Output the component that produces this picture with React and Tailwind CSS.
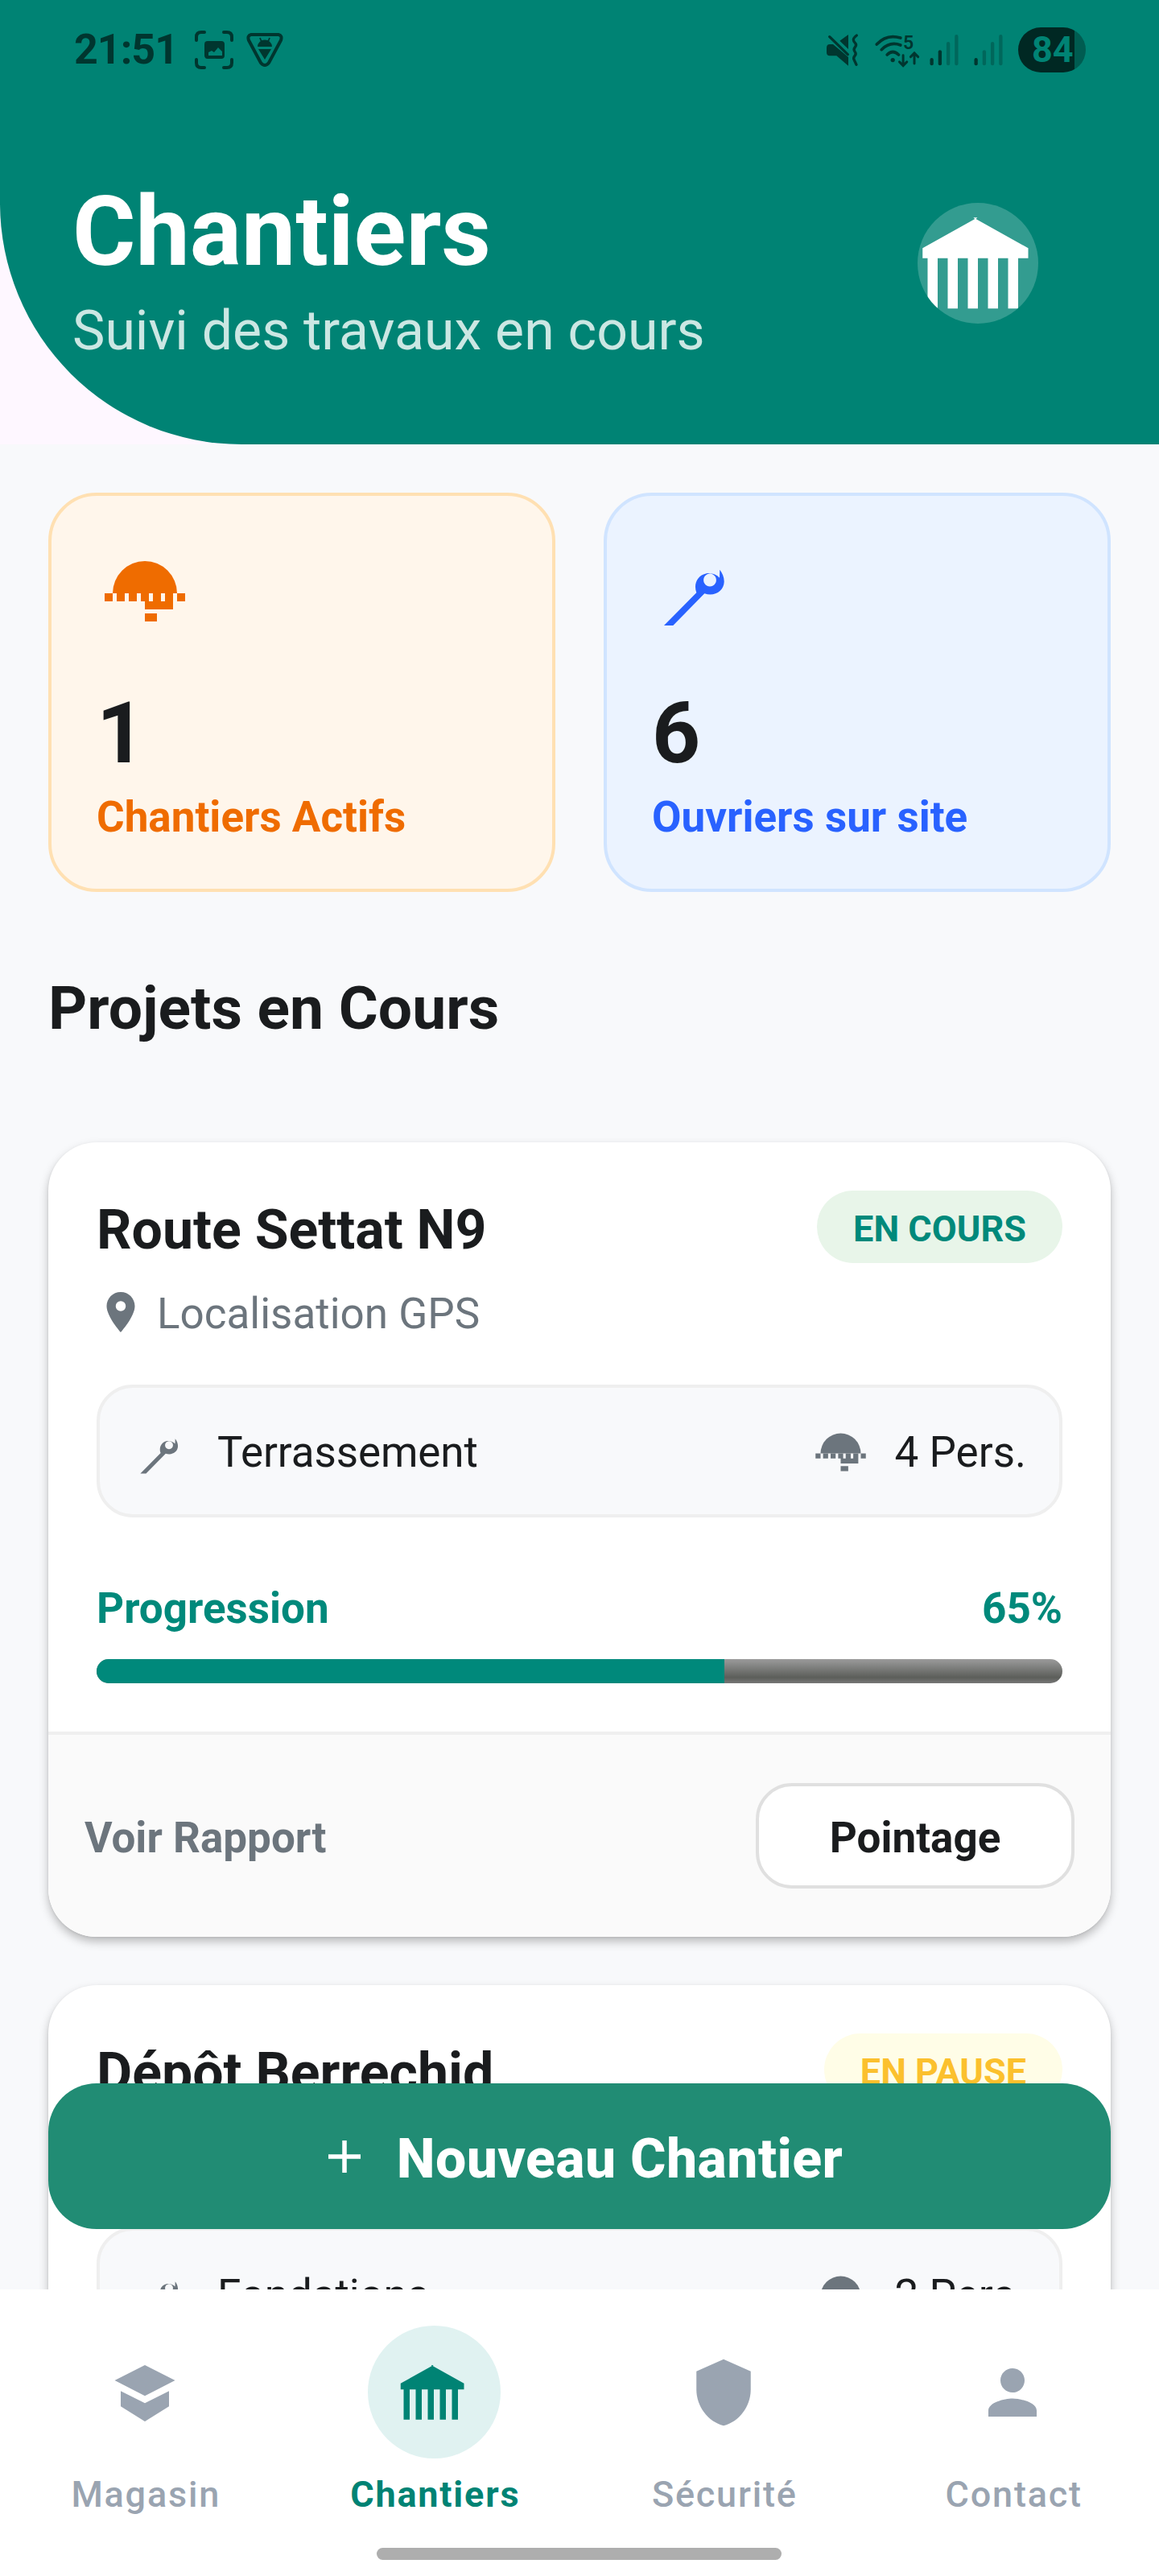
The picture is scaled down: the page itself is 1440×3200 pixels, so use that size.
import React from 'react';
import { clsx } from 'clsx';

const projects = [
    {
        name: 'Route Settat N9',
        status: 'EN COURS',
        badge: 'bg-[#e8f5e9] text-[#00897b]',
        task: 'Terrassement',
        workers: 4,
        progress: 65,
    },
    {
        name: 'Dépôt Berrechid',
        status: 'EN PAUSE',
        badge: 'bg-[#fffde7] text-[#fbc02d]',
        task: 'Fondations',
        workers: 2,
        progress: 30,
    },
];

const BankIcon = ({ className }) => (
    <svg viewBox="0 0 24 24" fill="currentColor" className={className}>
        <path d="M11.1 2.9h.8l-.3.3L22 9v2h-2v10h-2V11h-2v10h-2V11h-2v10h-2V11H8v10H6V11H4v10H2V11H1V9l10.4-5.8z" />
    </svg>
);

const HelmetIcon = ({ className }) => (
    <svg viewBox="0 0 24 24" fill="currentColor" className={className}>
        <path d="M4 12a8 8 0 0 1 16 0z" />
        <path d="M2 12h2v2H2zM5 12h2v2H5zM8 12h2v2H8zM11 12h2v2h-2zM14 12h2v2h-2zM17 12h2v2h-2zM20 12h2v2h-2zM12 14h7v2h-7zM12 17h3v2h-3z" />
    </svg>
);

const WrenchIcon = ({ className }) => (
    <svg viewBox="0 0 120 120" fill="currentColor" className={className}>
        <path
            fillRule="evenodd"
            d="M15 100 55.3 59.3C51.5 49 56 37.500 68 35.200C74 34.300 80 36.500 84 40.700L84.300 30.700C87.500 35 89.800 40 89.700 45.700C89.400 57 78 64.500 65.300 60.300L26.300 100zM72 35.600a7.900 8 0 1 0 .01 0z"
        />
    </svg>
);

const PinIcon = ({ className }) => (
    <svg viewBox="0 0 24 24" fill="currentColor" className={className}>
        <path d="M12 2C8.130 2 5 5.130 5 9c0 5.250 7 13 7 13s7-7.750 7-13c0-3.870-3.130-7-7-7zm0 9.500a2.500 2.500 0 1 1 0-5 2.500 2.500 0 0 1 0 5z" />
    </svg>
);

const BoxIcon = ({ className }) => (
    <svg viewBox="0 0 24 24" fill="currentColor" className={className}>
        <path d="M12 2.900 22 8 12 13.100 2 8zM4 11.500l8 4 8-4v5.100l-8 5-8-5z" />
    </svg>
);

const ShieldIcon = ({ className }) => (
    <svg viewBox="0 0 24 24" fill="currentColor" className={className}>
        <path d="M12 1 3 5v6c0 5.550 3.840 10.740 9 12 5.160-1.260 9-6.450 9-12V5z" />
    </svg>
);

const PersonIcon = ({ className }) => (
    <svg viewBox="0 0 24 24" fill="currentColor" className={className}>
        <path d="M12 12c2.210 0 4-1.790 4-4s-1.790-4-4-4-4 1.790-4 4 1.790 4 4 4zm0 2c-2.670 0-8 1.340-8 4v2h16v-2c0-2.660-5.330-4-8-4z" />
    </svg>
);

const SignalIcon = ({ level, className }) => (
    <svg viewBox="0 0 115 135" stroke="currentColor" strokeWidth="13" strokeLinecap="round" className={className}>
        <path d="M11 103v15" />
        <path d="M42 73v45" opacity={level > 1 ? 1 : 0.35} />
        <path d="M73 42v76M104 15v103" opacity="0.35" />
    </svg>
);

const StatusBar = () => (
    <div className="flex h-[124px] items-center pl-[92px] pr-[91px] text-[#00362f]">
        <span className="w-[130px] text-[52px] font-bold leading-[60px] tracking-[-1px]">21:51</span>
        <svg viewBox="0 0 48 48" className="ml-[20px] size-12 shrink-0" fill="none" stroke="currentColor" strokeWidth="4" strokeLinecap="round">
            <path d="M2 12V8q0-6 6-6h4M36 2h4q6 0 6 6v4M46 36v4q0 6-6 6h-4M12 46H8q-6 0-6-6v-4" />
            <rect x="12" y="13" width="25" height="22" rx="4" fill="currentColor" stroke="none" />
            <path d="m17 31v-4l4-2 3 2 5-6 5 5v5z" fill="#008374" stroke="none" />
        </svg>
        <svg viewBox="0 0 46 44" className="ml-[16px] h-[44px] w-[46px] shrink-0" fill="none" stroke="currentColor" strokeWidth="4" strokeLinejoin="round">
            <path d="M6 3h34q5 1 3 7L28 38q-5 6-10 0L3 10q-2-6 3-7z" />
            <path d="M14 18a9 8.500 0 0 1 18 0zM15 21h16l-8 13z" fill="currentColor" stroke="none" />
            <path d="m17 7 2 5m10-5-2 5" strokeWidth="1.800" />
        </svg>
        <div className="ml-auto flex items-center">
            <svg viewBox="0 0 123 135" className="h-[45px] w-[41px]" fill="currentColor">
                <path d="M84 9v54L52 32zM3 58q0-13 12-13h12L84 93v32L40 88H15Q3 88 3 75z" />
                <path d="m5 2 86 82" stroke="#008374" strokeWidth="9" />
                <path d="m14 17 68 66M115 12q-12 9-12 16t7 13q6 7-1 15t-1 16q7 8 0 16t-2 16q4 8 8 17" fill="none" stroke="currentColor" strokeWidth="10" strokeLinecap="round" />
            </svg>
            <svg viewBox="0 0 172 135" className="ml-[19px] h-[45px] w-[57px]" fill="none" stroke="currentColor" strokeWidth="11" strokeLinecap="round">
                <path d="M10 45Q47 5 99 21M28 65Q60 33 99 48M49 84Q70 63 92 84" />
                <circle cx="70" cy="104" r="8" fill="currentColor" stroke="none" />
                <path d="M109 86v38m-14-13 14 14 14-14M151 117V78m-14 14 14-14 14 14" strokeWidth="9" />
                <text x="109" y="63" fontSize="70" fontWeight="600" fill="currentColor" stroke="none">5</text>
            </svg>
            <SignalIcon level={2} className="ml-[11px] h-[45px] w-[38px]" />
            <SignalIcon level={1} className="ml-[17px] h-[45px] w-[38px]" />
            <div className="ml-[18px] flex h-14 w-[84px] items-center overflow-hidden rounded-[28px] bg-[linear-gradient(90deg,#002823_70px,#005c51_70px)] pl-[17px]">
                <span className="text-[45px] font-bold leading-[56px] text-[#008374]">84</span>
            </div>
        </div>
    </div>
);

const Header = () => (
    <div className="bg-[#fef7ff]">
        <header className="h-[552px] rounded-bl-[300px] bg-[#008374]">
            <StatusBar />
            <div className="flex items-start justify-between pl-[90px] pr-[150px] pt-[94px]">
                <div>
                    <h1 className="text-[120px] font-bold leading-[140px] text-white">Chantiers</h1>
                    <p className="mt-[13px] text-[68px] leading-[80px] text-[#cbe7e3]">Suivi des travaux en cours</p>
                </div>
                <div className="mt-[34px] size-[150px] overflow-hidden rounded-full bg-[#339c90]">
                    <BankIcon className="size-[150px] text-white" />
                </div>
            </div>
        </header>
    </div>
);

const StatCard = ({ icon, value, label, cardClass, colorClass }) => (
    <div className={clsx('h-[496px] flex-1 rounded-[60px] border-4 px-[56px] pt-[61px]', cardClass)}>
        <div className={colorClass}>{icon}</div>
        <div className="mt-[53px] text-[105px] font-bold leading-[124px]">{value}</div>
        <div className={clsx('mt-[11px] text-[53px] font-bold leading-[60px]', colorClass)}>{label}</div>
    </div>
);

const ProjectCard = ({ project }) => (
    <article className="overflow-hidden rounded-[60px] bg-white shadow-[0_6px_12px_rgba(0,0,0,0.25),0_1px_3px_rgba(0,0,0,0.08)]">
        <div className="p-[60px]">
            <div className="flex h-[90px] items-start justify-between">
                <h3 className="mt-[9px] text-[68px] font-bold leading-[80px]">{project.name}</h3>
                <span className={clsx('h-[90px] rounded-[45px] px-[45px] text-[45px] font-bold leading-[96px]', project.badge)}>
                    {project.status}
                </span>
            </div>

            <div className="mt-[31px] flex h-[65px] items-start gap-[15px] text-[#6c757d]">
                <PinIcon className="size-[60px]" />
                <span className="text-[53px] leading-[65px]">Localisation GPS</span>
            </div>

            <div className="mt-[55px] flex h-[165px] items-start justify-between rounded-[45px] border-4 border-[#efefef] bg-[#f8f9fb] px-[41px] pt-[44px] text-[53px] leading-[73px]">
                <div className="flex items-start gap-[30px]">
                    <WrenchIcon className="size-[75px] text-[#6c757d]" />
                    <span className="tracking-[-0.1px]">{project.task}</span>
                </div>
                <div className="flex items-start gap-[30px]">
                    <HelmetIcon className="size-[75px] text-[#6c757d]" />
                    <span>{project.workers} Pers.</span>
                </div>
            </div>

            <div className="mt-[82px] flex justify-between text-[53px] font-bold leading-[62px] text-[#00897b]">
                <span>Progression</span>
                <span>{project.progress}%</span>
            </div>
            <div className="mt-[32px] h-[30px] overflow-hidden rounded-[15px] bg-[linear-gradient(#9b9b9b,#5c5e5a_76%,#777777)]">
                <div className="h-full bg-[#00897b]" style={{ width: `${project.progress}%` }} />
            </div>
        </div>

        <div className="flex items-center justify-between border-t-4 border-[#efefef] bg-[#fafafa] px-[45px] py-[60px] text-[53px] font-bold leading-[62px]">
            <span className="pt-[4px] text-[#6c757d]">Voir Rapport</span>
            <button className="h-[131px] w-[396px] rounded-[45px] border-4 border-[#e0e0e0] bg-white pt-[4px]">Pointage</button>
        </div>
    </article>
);

const NavItem = ({ icon, label, active }) => (
    <div className={clsx('flex flex-1 flex-col items-center', active ? 'text-[#008374]' : 'text-[#9aa4b1]')}>
        <div className={clsx('flex size-[165px] items-center justify-center rounded-full', active && 'bg-[#e0f2f1]')}>
            {icon}
        </div>
        <span className={clsx('mt-[18px] pl-[3px] text-[45px] leading-[54px] tracking-[1.8px]', active ? 'font-bold' : 'font-medium')}>
            {label}
        </span>
    </div>
);

const App = () => {
    return (
        <div className="flex h-[3200px] w-[1440px] flex-col overflow-hidden bg-[#f8f9fb] font-['Roboto',sans-serif] text-[#1a1c1e]">
            <Header />

            <main className="relative min-h-0 flex-1 overflow-hidden px-[60px] pt-[60px]">
                <div className="flex gap-[60px]">
                    <StatCard
                        icon={<HelmetIcon className="size-[120px]" />}
                        value="1"
                        label="Chantiers Actifs"
                        cardClass="border-[#ffe0b2] bg-[#fff6eb]"
                        colorClass="text-[#ef6c00]"
                    />
                    <StatCard
                        icon={<WrenchIcon className="size-[120px]" />}
                        value="6"
                        label="Ouvriers sur site"
                        cardClass="border-[#d0e4ff] bg-[#ebf3ff]"
                        colorClass="text-[#2962ff]"
                    />
                </div>

                <h2 className="mt-[99px] text-[75px] font-bold leading-[90px]">Projets en Cours</h2>

                <div className="mt-[122px] flex flex-col gap-[60px]">
                    {projects.map((project) => (
                        <ProjectCard key={project.name} project={project} />
                    ))}
                </div>

                <button className="absolute inset-x-[60px] bottom-[75px] flex h-[181px] items-center justify-center gap-[45px] rounded-[60px] bg-[#218c74] pl-[15px] text-white">
                    <svg viewBox="0 0 40 40" className="size-10" stroke="currentColor" strokeWidth="5.500">
                        <path d="M20 0v40M0 20h40" />
                    </svg>
                    <span className="pt-[6px] text-[68px] font-extrabold leading-[80px] tracking-[0.4px]">Nouveau Chantier</span>
                </button>
            </main>

            <nav className="h-[356px] bg-white pr-[2px] pt-[45px]">
                <div className="flex">
                    <NavItem icon={<BoxIcon className="size-[90px]" />} label="Magasin" />
                    <NavItem icon={<BankIcon className="size-[90px]" />} label="Chantiers" active />
                    <NavItem icon={<ShieldIcon className="size-[90px]" />} label="Sécurité" />
                    <NavItem icon={<PersonIcon className="size-[90px]" />} label="Contact" />
                </div>
                <div className="mx-auto mt-[39px] h-[15px] w-[503px] rounded-full bg-[#aeaeae]" />
            </nav>
        </div>
    );
};

export default App;
